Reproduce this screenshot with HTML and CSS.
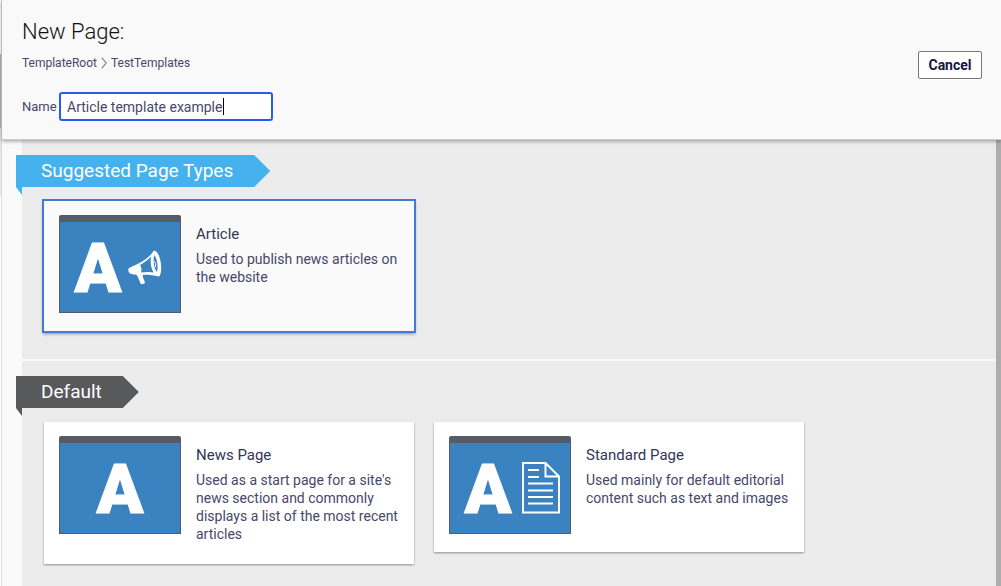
FILE: index.html
```html
<!DOCTYPE html>
<html lang="en">
<head>
<meta charset="utf-8">
<meta name="viewport" content="width=device-width, initial-scale=1">
<title>New Page</title>
<link rel="stylesheet" href="styles.css">
</head>
<body>
<div class="rail"></div>
<main class="dialog">
  <header class="header">
    <div class="header-main">
      <h1 class="title">New Page:</h1>
      <nav class="crumbs" aria-label="Breadcrumb">
        <span>TemplateRoot</span>
        <svg class="chevron" viewBox="0 0 6 12" aria-hidden="true"><path d="M.7.7 5.3 6 .7 11.3" fill="none" stroke="#888" stroke-width="1.200"/></svg>
        <span>TestTemplates</span>
      </nav>
      <div class="field">
        <label for="name">Name</label>
        <div class="field-box">
          <input class="input" id="name" type="text" value="Article template example">
          <span class="caret"></span>
        </div>
      </div>
    </div>
    <button class="cancel" type="button">Cancel</button>
  </header>
  <div class="body">
    <div class="sections">
      <section class="section section-suggested">
        <h2 class="ribbon">Suggested Page Types</h2>
        <div class="cards">
          <article class="card card-selected">
            <svg class="thumb" viewBox="0 0 122 98" aria-hidden="true">
              <path d="M0 98V2Q0 0 2 0H120Q122 0 122 2V98Z" fill="#555b68"/>
              <path d="M1 7H121V97H1Z" fill="#3b82c0"/>
              <text class="letter" x="39" y="77">A</text>
              <path d="M95 35.500C98 35.500 101 41 102 49C102.500 55 102 61 99.500 61.500C94 60 89 59.500 84 59.800C83 62 85.500 65 86 67.500C85.500 69 83 69.500 81.500 68.500C80 65 79 61 77 59.500C74 59.500 71 59 70 57.500C69 56 69 54 70 53C76 50 88 46 95 35.500Z" fill="#fff"/>
              <path d="M81 50C85 48 89 45 92 41.500C91 47 92 53 94.500 57.500C90 56.500 86 57 82 57.500C83 55 82.500 52 81 50Z" fill="#3b82c0"/>
              <path d="M95.500 40C98 44 99.500 51 98 57C95 54 93.500 45 95.500 40Z" fill="#3b82c0"/>
              <path d="M95 46Q97.500 48 96.500 52" fill="none" stroke="#fff" stroke-width="1"/>
            </svg>
            <div class="card-text">
              <h3 class="card-title">Article</h3>
              <p class="card-desc">Used to publish news articles on the website</p>
            </div>
          </article>
        </div>
      </section>
      <section class="section section-default">
        <h2 class="ribbon ribbon-dark">Default</h2>
        <div class="cards">
          <article class="card">
            <svg class="thumb" viewBox="0 0 122 98" aria-hidden="true">
              <path d="M0 98V2Q0 0 2 0H120Q122 0 122 2V98Z" fill="#555b68"/>
              <path d="M1 7H121V97H1Z" fill="#3b82c0"/>
              <text class="letter" x="61" y="77">A</text>
            </svg>
            <div class="card-text">
              <h3 class="card-title">News Page</h3>
              <p class="card-desc">Used as a start page for a site's news section and commonly displays a list of the most recent articles</p>
            </div>
          </article>
          <article class="card">
            <svg class="thumb" viewBox="0 0 122 98" aria-hidden="true">
              <path d="M0 98V2Q0 0 2 0H120Q122 0 122 2V98Z" fill="#555b68"/>
              <path d="M1 7H121V97H1Z" fill="#3b82c0"/>
              <text class="letter" x="39" y="77">A</text>
              <path d="M74 27H96.500L110 40.500V76.500H74ZM96.500 27V40.500H110" fill="none" stroke="#fff" stroke-width="2"/>
              <path d="M79 34H90M79 41H90M79 47.500H104M79 54.500H104M79 61H104M79 67.500H104" stroke="#fff" stroke-width="2"/>
            </svg>
            <div class="card-text">
              <h3 class="card-title">Standard Page</h3>
              <p class="card-desc">Used mainly for default editorial content such as text and images</p>
            </div>
          </article>
        </div>
      </section>
    </div>
    <div class="scrollbar"></div>
  </div>
</main>
</body>
</html>
```
FILE: styles.css
```css
* { box-sizing: border-box; }

body {
  margin: 0;
  display: flex;
  height: 100vh;
  overflow: hidden;
  font-family: Roboto, "Liberation Sans", sans-serif;
  font-size: 14px;
  color: #47476a;
  background: #fff;
}

.rail {
  flex: none;
  width: 2px;
  border-right: 1px solid #dcdcdc;
  background: linear-gradient(#fff 54px, #b4b4b4 54px, #b4b4b4 128px, #e4e4e4 128px, #e4e4e4 196px, #fff 196px);
}

.dialog {
  flex: 1;
  min-width: 0;
  display: flex;
  flex-direction: column;
  background: #fafafa;
}

.header {
  position: relative;
  z-index: 1;
  flex: none;
  display: flex;
  justify-content: space-between;
  align-items: flex-start;
  padding: 18px 19px 18px 20px;
  background: #f9f9f9;
  border-bottom: 1px solid #ccc;
  box-shadow: 0 1px 4px rgba(0, 0, 0, 0.4);
}

.title {
  margin: 0;
  font-size: 22px;
  font-weight: 300;
  line-height: 28px;
  color: #111;
}

.crumbs {
  display: flex;
  align-items: center;
  gap: 4px;
  margin-top: 8px;
  font-size: 12px;
  line-height: 18px;
}

.chevron {
  width: 6px;
  height: 12px;
}

.field {
  display: flex;
  align-items: center;
  gap: 2px;
  margin-top: 20px;
}

.field label {
  width: 35px;
  white-space: nowrap;
  font-size: 13px;
}

.field-box {
  position: relative;
}

.input {
  display: block;
  width: 214px;
  height: 29px;
  padding: 0 6px;
  border: 2px solid #2a5bf0;
  border-radius: 3px;
  outline: none;
  background: #fff;
  font: inherit;
  color: inherit;
}

.caret {
  position: absolute;
  left: 164px;
  top: 6px;
  width: 1px;
  height: 17px;
  background: #000;
}

.cancel {
  width: 64px;
  height: 28px;
  margin-top: 33px;
  padding: 0;
  border: 1px solid #777;
  border-radius: 2px;
  background: #fff;
  font: inherit;
  font-weight: 700;
  color: #15153f;
}

.body {
  flex: 1;
  min-height: 0;
  display: flex;
}

.sections {
  flex: 1;
  min-width: 0;
  display: flex;
  flex-direction: column;
  gap: 2px;
  padding-left: 20px;
}

.scrollbar {
  flex: none;
  width: 5px;
  background: #adadad;
}

.section {
  padding: 15px 0 28px;
  background: #ececec;
}

.section-default {
  flex: 1;
}

.ribbon {
  position: relative;
  width: fit-content;
  margin: 0 0 14px -6px;
  padding: 0 37px 0 25px;
  font-size: 19px;
  font-weight: 400;
  line-height: 32px;
  color: #fff;
  background: #45b2ee;
  clip-path: polygon(0 0, calc(100% - 16px) 0, 100% 16px, calc(100% - 16px) 32px, 6px 32px, 6px 40px, 0 32px);
}

.ribbon::after {
  content: "";
  position: absolute;
  left: 0;
  top: 100%;
  width: 6px;
  height: 8px;
  background: inherit;
}

.ribbon-dark {
  background: #58595b;
}

.cards {
  display: flex;
  flex-wrap: wrap;
  align-items: flex-start;
  gap: 20px;
  padding-left: 22px;
}

.card {
  display: flex;
  align-items: flex-start;
  gap: 15px;
  width: 370px;
  padding: 14px 10px 18px 15px;
  background: #fff;
  box-shadow: 0 1px 2px rgba(0, 0, 0, 0.4);
}

.card-selected {
  outline: 2px solid #4479dc;
  background: #fafafa;
  box-shadow: 0 2px 3px 1px rgba(0, 0, 0, 0.4);
}

.thumb {
  flex: none;
  width: 122px;
  height: 98px;
}

.letter {
  font-family: Roboto, sans-serif;
  font-size: 69px;
  font-weight: 900;
  text-anchor: middle;
  fill: #fff;
  stroke: #fff;
  stroke-width: 1px;
}

.card-text {
  flex: 1;
  min-width: 0;
  padding: 8px 0 3px;
}

.card-title {
  margin: 0 0 5px;
  font-size: 15px;
  font-weight: 400;
  line-height: 22px;
  color: #343455;
}

.card-desc {
  margin: 0;
  line-height: 18px;
}
```
